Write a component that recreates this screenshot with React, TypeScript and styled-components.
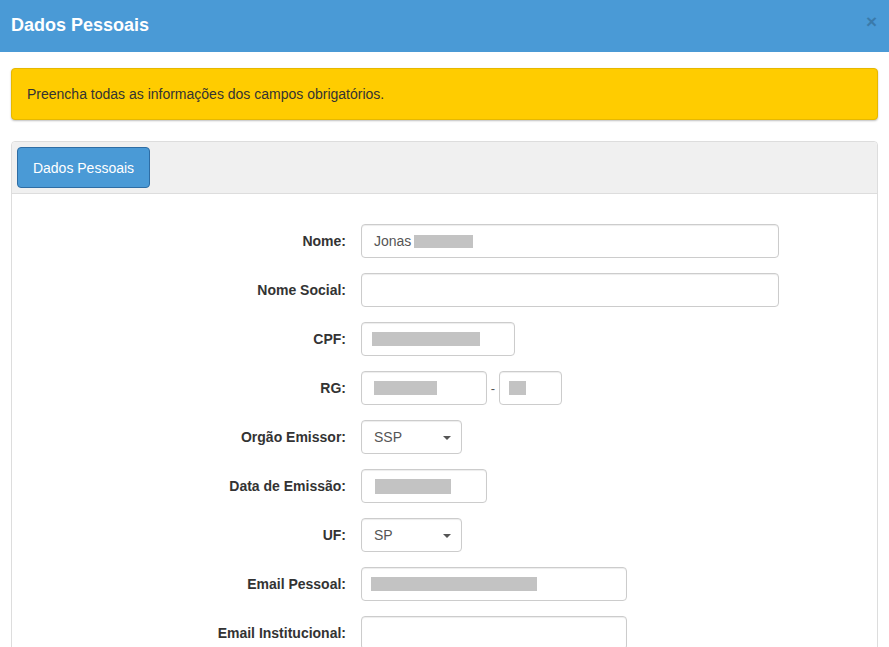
import React from "react";
import styled, { createGlobalStyle } from "styled-components";

const Global = createGlobalStyle`
  html, body { margin: 0; padding: 0; background: #fff; overflow: hidden; }
  body { font-family: "Liberation Sans", Arial, Helvetica, sans-serif; font-size: 14px; color: #333; }
  * { box-sizing: border-box; }
`;

const Header = styled.div`
  height: 52px;
  background: #4a9ad6;
  display: flex;
  align-items: center;
  justify-content: space-between;
  padding: 0 11px 0 11px;
`;

const Title = styled.h4`
  margin: 0;
  margin-top: -1px;
  font-size: 18px;
  font-weight: bold;
  color: #fff;
`;

const Close = styled.span`
  font-size: 19px;
  font-weight: bold;
  color: #000;
  opacity: 0.2;
  line-height: 1;
  margin-top: -10px;
  margin-right: 1px;
`;

const Body = styled.div`
  padding: 16px 11px;
`;

const Alert = styled.div`
  background: #ffcc00;
  border: 1px solid #e6b800;
  border-radius: 4px;
  box-shadow: 0 1px 2px rgba(0, 0, 0, 0.25);
  height: 52px;
  display: flex;
  align-items: center;
  padding: 0 15px;
  margin-bottom: 21px;
  color: #333;
`;

const Panel = styled.div`
  border: 1px solid #ddd;
  border-radius: 4px;
  background: #fff;
`;

const PanelHeading = styled.div`
  background: #f0f0f0;
  border-bottom: 1px solid #ddd;
  padding: 5px 5px;
  border-radius: 4px 4px 0 0;
`;

const TabButton = styled.div`
  display: inline-flex;
  align-items: center;
  justify-content: center;
  width: 133px;
  height: 41px;
  background: #4a9ad6;
  border: 1px solid #2e6da4;
  border-radius: 4px;
  color: #fff;
  font-size: 14px;
`;

const Form = styled.div`
  display: grid;
  grid-template-columns: 349px 1fr;
  row-gap: 15px;
  padding-top: 30px;
  padding-bottom: 15px;
  align-items: center;
`;

const Label = styled.label`
  text-align: right;
  padding-right: 15px;
  font-weight: bold;
  font-size: 14px;
  color: #333;
`;

const Field = styled.div<{ $w: number }>`
  width: ${(p) => p.$w}px;
  height: 34px;
  border: 1px solid #ccc;
  border-radius: 4px;
  box-shadow: inset 0 1px 1px rgba(0, 0, 0, 0.075);
  background: #fff;
  display: flex;
  align-items: center;
  padding: 0 12px;
  color: #555;
  font-size: 14px;
  position: relative;
`;

const Blur = styled.span<{ $w: number; $ml?: number; $h?: number }>`
  display: inline-block;
  width: ${(p) => p.$w}px;
  height: ${(p) => p.$h ?? 14}px;
  margin-left: ${(p) => p.$ml ?? 0}px;
  background: #c3c3c3;
`;

const Inline = styled.div`
  display: flex;
  align-items: center;
`;

const Dash = styled.span`
  width: 12px;
  text-align: center;
  color: #555;
  font-size: 13px;
`;

const Caret = styled.span`
  position: absolute;
  right: 10px;
  top: 15px;
  width: 0;
  height: 0;
  border-left: 4px solid transparent;
  border-right: 4px solid transparent;
  border-top: 4px solid #555;
`;

export default function App() {
  return (
    <>
      <Global />
      <Header>
        <Title>Dados Pessoais</Title>
        <Close>×</Close>
      </Header>
      <Body>
        <Alert>Preencha todas as informações dos campos obrigatórios.</Alert>
        <Panel>
          <PanelHeading>
            <TabButton>Dados Pessoais</TabButton>
          </PanelHeading>
          <Form>
            <Label>Nome:</Label>
            <Field $w={418}>
              Jonas
              <Blur $w={59} $h={13} $ml={3} />
            </Field>

            <Label>Nome Social:</Label>
            <Field $w={418} />

            <Label>CPF:</Label>
            <Field $w={154}>
              <Blur $w={108} $ml={-2} />
            </Field>

            <Label>RG:</Label>
            <Inline>
              <Field $w={126}>
                <Blur $w={63} />
              </Field>
              <Dash>-</Dash>
              <Field $w={63}>
                <Blur $w={17} $ml={-3} />
              </Field>
            </Inline>

            <Label>Orgão Emissor:</Label>
            <Field $w={101}>
              SSP
              <Caret />
            </Field>

            <Label>Data de Emissão:</Label>
            <Field $w={126}>
              <Blur $w={76} $h={15} $ml={1} />
            </Field>

            <Label>UF:</Label>
            <Field $w={101}>
              SP
              <Caret />
            </Field>

            <Label>Email Pessoal:</Label>
            <Field $w={266}>
              <Blur $w={166} $ml={-3} />
            </Field>

            <Label>Email Institucional:</Label>
            <Field $w={266} />
          </Form>
        </Panel>
      </Body>
    </>
  );
}
